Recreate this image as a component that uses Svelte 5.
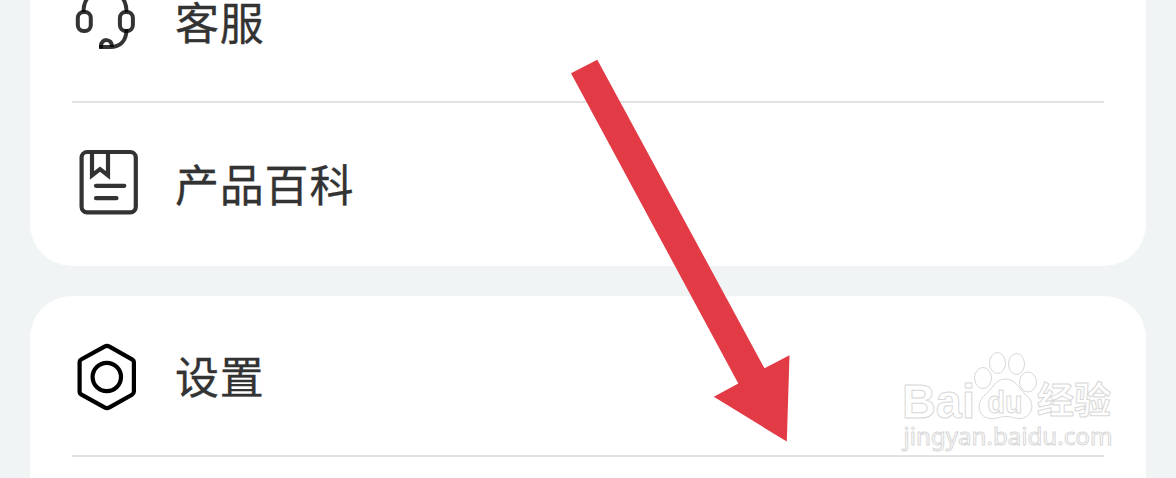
<script lang="ts">
  type Item = { icon: string; label: string };

  const groups: Item[][] = [
    [
      { icon: 'service', label: '客服' },
      { icon: 'book', label: '产品百科' }
    ],
    [
      { icon: 'settings', label: '设置' },
      { icon: '', label: '' }
    ]
  ];
</script>

<main class="page">
  {#each groups as items}
    <section class="card">
      {#each items as item}
        <div class="row">
          <svg class="icon" viewBox="0 0 70 70" width="70" height="70">
            {#if item.icon === 'service'}
              <g fill="none" stroke="#000" stroke-opacity=".8" stroke-width="4">
                <path d="M11.5 27C11.5 14 19 5 33 5S54.5 14 54.5 27" />
                <rect x="5.8" y="26.9" width="13" height="19.2" rx="6" />
                <rect x="47.9" y="26.9" width="13" height="19.2" rx="6" />
                <path d="M54.5 44C54.5 56 48 62 38 62H27.2" />
                <path d="M29 63.5V61C29 53 40.5 53 40 62" />
              </g>
            {:else if item.icon === 'book'}
              <g fill="none" stroke="#333" stroke-width="4.2">
                <rect x="9.6" y="4" width="54.2" height="60.3" rx="5.5" />
                <path d="M20 4.5V27.5L28 21.1L36 27.5V4.5" />
                <path d="M24 37.8H52.3M24 50.2H44.5" stroke-linecap="round" />
              </g>
            {:else if item.icon === 'settings'}
              <g fill="none" stroke="#000" stroke-width="4.2" stroke-linejoin="round">
                <path d="M32.5 4.6Q35 3.3 37.5 4.6L60 17.3Q61.9 18.4 61.9 20.5V49.5Q61.9 51.6 60 52.7L37.5 65.4Q35 66.7 32.5 65.4L9.5 52.7Q7.6 51.6 7.6 49.5V20.5Q7.6 18.4 9.5 17.3Z" />
                <circle cx="34.8" cy="35" r="14.2" />
              </g>
            {/if}
          </svg>
          <span class="label">{item.label}</span>
        </div>
      {/each}
    </section>
  {/each}

  <svg class="arrow" viewBox="0 0 220 384" width="220" height="384">
    <path d="M1 14.2L27.3 .8L194.5 309.3L219.5 296.2L216.8 382.6L143.8 337.8L168.3 324.5Z" fill="#e33b46" />
  </svg>

  <svg class="watermark" viewBox="0 0 240 120" width="240" height="120">
    <g class="outline">
      <text x="12" y="77.5" font-size="49" font-weight="700" textLength="73" lengthAdjust="spacingAndGlyphs">Bai</text>
      <ellipse cx="107.5" cy="23" rx="8" ry="10.5" />
      <ellipse cx="126.5" cy="24" rx="8" ry="10.5" />
      <ellipse cx="93" cy="38" rx="8.5" ry="10.5" />
      <ellipse cx="138" cy="42" rx="8.5" ry="10" />
      <path d="M115 39C105 39 103 49 95 55C86 62 87 78 101 78.5C108 79 110 76.5 116 76.5C123 76.5 125 79 131 78.5C143 77 145 62 137 56C129 49 126 39 115 39Z" />
      <text x="97.5" y="72.5" font-size="31" font-weight="700" textLength="35" lengthAdjust="spacingAndGlyphs">du</text>
      <text class="cn" x="147" y="74" font-size="37" font-weight="700" textLength="74">经验</text>
      <text class="url" x="13.5" y="104.5" font-size="24" textLength="209" lengthAdjust="spacingAndGlyphs">jingyan.baidu.com</text>
    </g>
  </svg>
</main>

<style>
  :global(body) {
    margin: 0;
    background: #f0f4f5;
  }

  .page {
    position: relative;
    box-sizing: border-box;
    height: 478px;
    padding: 0 30px;
    overflow: hidden;
    font-family: "Noto Sans CJK SC", sans-serif;
  }

  .card {
    box-sizing: border-box;
    height: 324px;
    padding: 0 42px;
    margin-bottom: 30px;
    background: #fff;
    border-radius: 42px;
  }

  /* the list is scrolled a little past its first row */
  .card:first-child {
    margin-top: -58px;
  }

  .row {
    display: flex;
    align-items: center;
    box-sizing: border-box;
    height: 161px;
    padding-top: 3px;
    border-bottom: 2px solid #e3e3e3;
  }

  .row:last-child {
    height: 163px;
    padding: 0 0 4px;
    border-bottom: 0;
  }

  .icon {
    flex: none;
    margin-right: 33px;
  }

  .card:first-child .row:first-child .icon {
    margin-top: -7px;
  }

  .label {
    color: #333;
    font-size: 44px;
    line-height: 44px;
    letter-spacing: 0.8px;
    -webkit-text-stroke: 0.3px #333;
  }

  .row:first-child .label {
    margin-top: -4px;
  }

  .arrow {
    position: absolute;
    left: 570px;
    top: 59px;
  }

  .watermark {
    position: absolute;
    left: 890px;
    top: 340px;
  }

  .outline {
    fill: #fff;
    stroke: #d8d8d8;
    stroke-width: 1;
    font-family: "Liberation Sans", Arial, sans-serif;
  }

  .cn {
    font-family: "Noto Sans CJK SC", sans-serif;
  }

  .url {
    font-family: "Noto Sans", sans-serif;
  }
</style>
